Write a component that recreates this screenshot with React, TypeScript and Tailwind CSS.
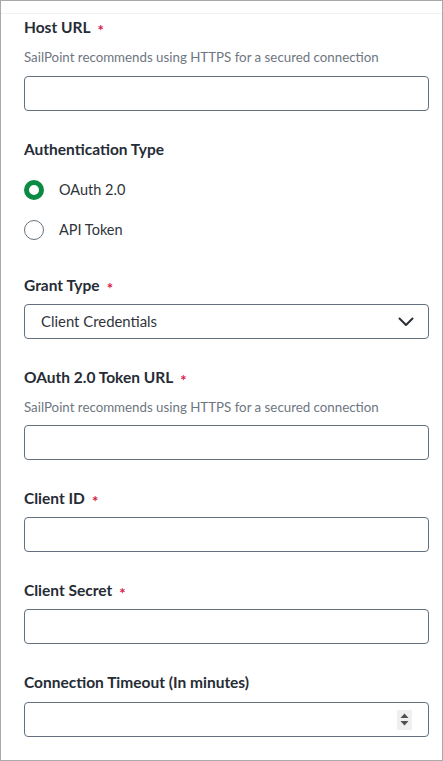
import React from "react";

const font = { fontFamily: "Lato, 'Noto Sans', sans-serif" };

function Star() {
  return <span className="ml-[7px] text-[15px] leading-none text-[#d9184b] relative top-[3px]">*</span>;
}

function Label({ text, required }: { text: string; required?: boolean }) {
  return (
    <div className="h-[20px] leading-[20px] flex items-center text-[15.5px] font-bold text-[#262c35]">
      <span>{text}</span>
      {required && <Star />}
    </div>
  );
}

function Helper() {
  return (
    <div className="h-[18px] leading-[18px] text-[13.3px] text-[#6d7681]">
      SailPoint recommends using HTTPS for a secured connection
    </div>
  );
}

function Input({ children }: { children?: React.ReactNode }) {
  return (
    <div className="h-[35px] w-full rounded-[4px] border border-[#63707e] bg-white flex items-center">
      {children}
    </div>
  );
}

export default function App() {
  return (
    <div style={font} className="w-[443px] h-[761px] border border-[#a9a9a9] bg-white overflow-hidden">
      <div className="h-[13px] border-b border-[#f2f2f2]" />
      <div className="pl-[23px] pr-[13px] flex flex-col">
        <div className="mt-[3px]">
          <Label text="Host URL" required />
          <div className="mt-[11px]"><Helper /></div>
          <div className="mt-[10px]"><Input /></div>
        </div>

        <div className="mt-[28px]">
          <Label text="Authentication Type" />
          <div className="mt-[21px] flex flex-col gap-[20px]">
            <div className="flex items-center h-[20px]">
              <div className="w-[20px] h-[20px] rounded-full border-[5px] border-[#0a8a42] bg-white" />
              <span className="ml-[15px] text-[14.5px] text-[#2f343b]">OAuth 2.0</span>
            </div>
            <div className="flex items-center h-[20px]">
              <div className="w-[20px] h-[20px] rounded-full border-[1.5px] border-[#66717c] bg-white" />
              <span className="ml-[15px] text-[14.5px] text-[#2f343b]">API Token</span>
            </div>
          </div>
        </div>

        <div className="mt-[35px]">
          <Label text="Grant Type" required />
          <div className="mt-[9px]">
            <Input>
              <span className="pl-[16px] flex-1 text-[14.9px] text-[#2f343b]">Client Credentials</span>
              <svg width="16" height="10" viewBox="0 0 16 10" className="mr-[14px]">
                <path d="M1.5 1.5 L8 8 L14.5 1.5" fill="none" stroke="#2b2f35" strokeWidth="2" strokeLinecap="round" strokeLinejoin="round" />
              </svg>
            </Input>
          </div>
        </div>

        <div className="mt-[28px]">
          <Label text="OAuth 2.0 Token URL" required />
          <div className="mt-[11px]"><Helper /></div>
          <div className="mt-[9px]"><Input /></div>
        </div>

        <div className="mt-[28px]">
          <Label text="Client ID" required />
          <div className="mt-[9px]"><Input /></div>
        </div>

        <div className="mt-[28px]">
          <Label text="Client Secret" required />
          <div className="mt-[9px]"><Input /></div>
        </div>

        <div className="mt-[28px]">
          <Label text="Connection Timeout (In minutes)" />
          <div className="mt-[10px]">
            <Input>
              <div className="flex-1" />
              <div className="mr-[16px] w-[15px] h-[20px] bg-[#efefef] flex flex-col items-center justify-center gap-[3px]">
                <svg width="9" height="5" viewBox="0 0 9 5"><path d="M0.5 5 L4.5 0.5 L8.5 5 Z" fill="#505050" /></svg>
                <svg width="9" height="5" viewBox="0 0 9 5"><path d="M0.5 0 L4.5 4.5 L8.5 0 Z" fill="#505050" /></svg>
              </div>
            </Input>
          </div>
        </div>
      </div>
    </div>
  );
}
